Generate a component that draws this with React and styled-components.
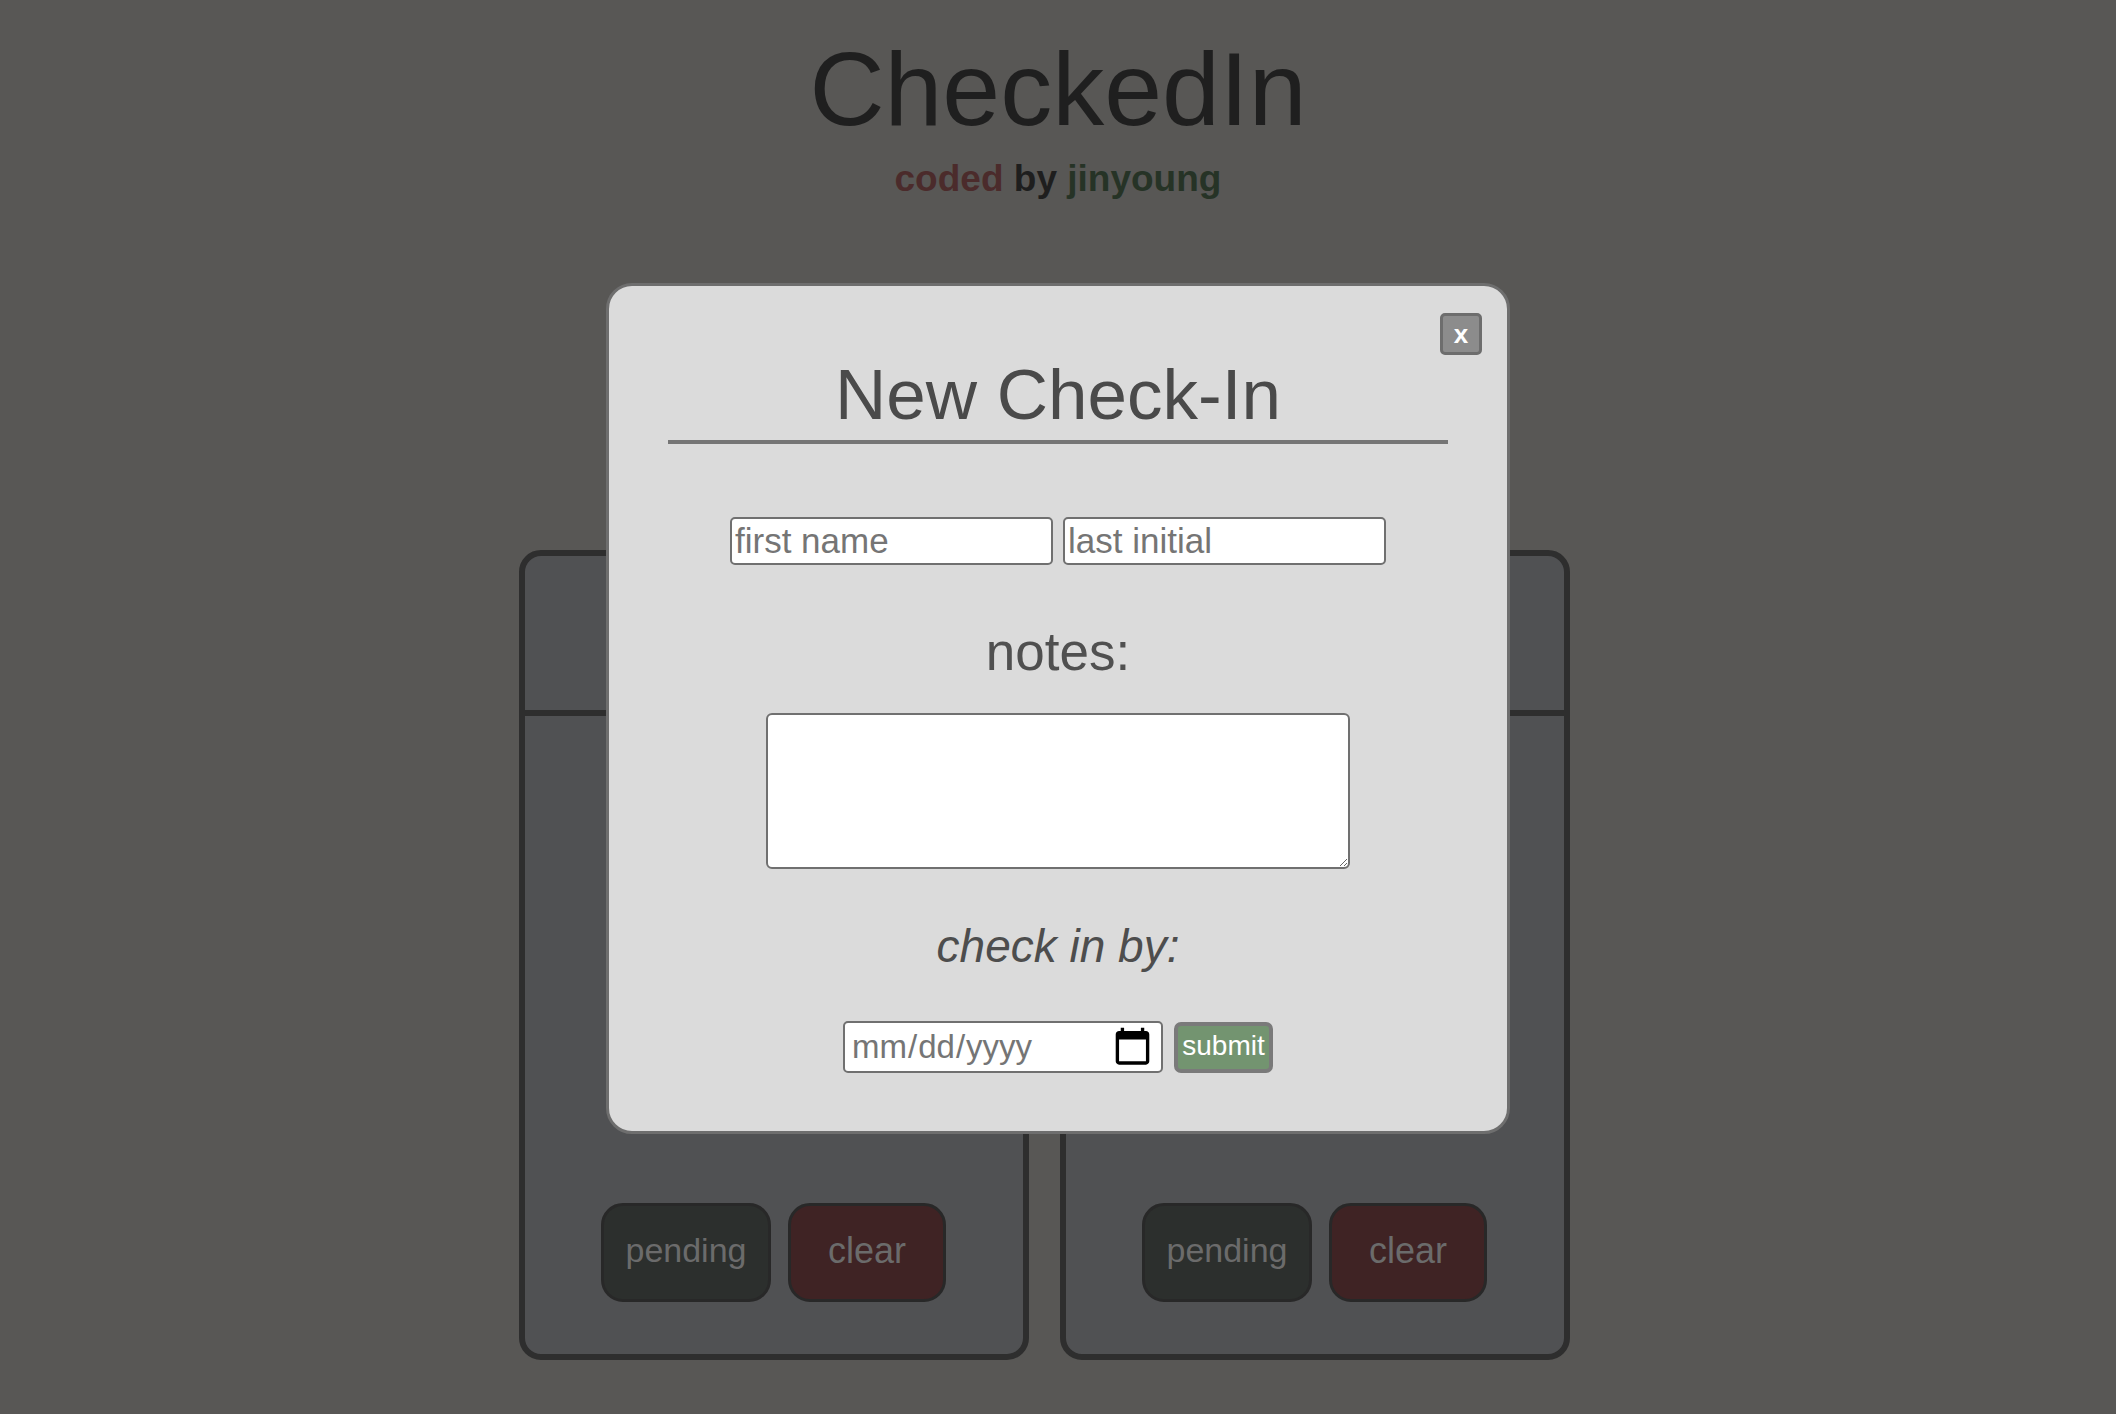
import React, { useState } from 'react';
import styled, { createGlobalStyle } from 'styled-components';

const GlobalStyle = createGlobalStyle`
    html, body {
        margin: 0;
        padding: 0;
        background: #585755;
        font-family: "Liberation Sans", Arial, Helvetica, sans-serif;
    }
    * {
        box-sizing: border-box;
    }
`;

const cards = [
    { id: 1, name: '' },
    { id: 2, name: '' }
];

const App = () => {
    const [input, setInput] = useState({
        first: '',
        last: '',
        notes: '',
        date: ''
    });
    const handleChange = e => {
        const { name, value } = e.target;
        setInput({ ...input, [name]: value });
    };
    return (
        <Page>
            <GlobalStyle />
            <Header>
                <Title>CheckedIn</Title>
                <Byline>
                    <Word tone="#4b2b2b">coded</Word> <Word tone="#1e1e1e">by</Word>{' '}
                    <Word tone="#263326">jinyoung</Word>
                </Byline>
            </Header>
            <CardRow>
                {cards.map(card => (
                    <Card key={card.id}>
                        <CardHead>{card.name}</CardHead>
                        <CardBody>
                            <ActionRow>
                                <ActionButton bg="#2c2f2d" w={170}>
                                    pending
                                </ActionButton>
                                <ActionButton bg="#3f2324" w={158} size={36}>
                                    clear
                                </ActionButton>
                            </ActionRow>
                        </CardBody>
                    </Card>
                ))}
            </CardRow>
            <Overlay>
                <Modal>
                    <CloseRow>
                        <CloseButton>x</CloseButton>
                    </CloseRow>
                    <ModalTitle>New Check-In</ModalTitle>
                    <NameRow>
                        <TextInput
                            name="first"
                            placeholder="first name"
                            value={input.first}
                            onChange={handleChange}
                        />
                        <TextInput
                            name="last"
                            placeholder="last initial"
                            value={input.last}
                            onChange={handleChange}
                        />
                    </NameRow>
                    <Label>notes:</Label>
                    <Notes name="notes" value={input.notes} onChange={handleChange} />
                    <DueLabel>check in by:</DueLabel>
                    <SubmitRow>
                        <DateInput
                            type="date"
                            name="date"
                            value={input.date}
                            onChange={handleChange}
                        />
                        <SubmitButton>submit</SubmitButton>
                    </SubmitRow>
                </Modal>
            </Overlay>
        </Page>
    );
};

export default App;

const Page = styled.div`
    min-height: 1414px;
    display: flex;
    flex-direction: column;
    align-items: center;
`;

const Header = styled.header`
    display: flex;
    flex-direction: column;
    align-items: center;
    padding-top: 34px;
`;

const Title = styled.h1`
    margin: 0;
    font-size: 104px;
    line-height: 110px;
    font-weight: 400;
    color: #1f1f1f;
`;

const Byline = styled.div`
    margin-top: 13px;
    font-size: 37px;
    line-height: 44px;
    font-weight: 700;
`;

const Word = styled.span`
    color: ${props => props.tone};
`;

const CardRow = styled.div`
    display: flex;
    gap: 31px;
    margin-top: 349px;
    padding-right: 28px;
`;

const Card = styled.div`
    width: 510px;
    height: 810px;
    display: flex;
    flex-direction: column;
    background: #505153;
    border: 6px solid #2e2e2e;
    border-radius: 22px;
    overflow: hidden;
`;

const CardHead = styled.div`
    height: 160px;
    border-bottom: 6px solid #2e2e2e;
`;

const CardBody = styled.div`
    flex: 1;
    display: flex;
    flex-direction: column;
    justify-content: flex-end;
    padding-bottom: 52px;
`;

const ActionRow = styled.div`
    display: flex;
    justify-content: center;
    gap: 17px;
`;

const ActionButton = styled.button`
    width: ${props => props.w}px;
    height: 99px;
    background: ${props => props.bg};
    border: 3px solid #282828;
    border-radius: 22px;
    color: #6b6b6b;
    font-family: "Liberation Sans", Arial, sans-serif;
    font-size: ${props => props.size || 34}px;
    padding: 0 0 4px;
`;

const Overlay = styled.div`
    position: fixed;
    inset: 0;
    display: flex;
    align-items: center;
    justify-content: center;
    padding-top: 3px;
`;

const Modal = styled.div`
    width: 904px;
    display: flex;
    flex-direction: column;
    align-items: center;
    background: #dbdbdb;
    border: 3px solid #6e6e6e;
    border-radius: 26px;
    padding: 27px 25px 58px;
`;

const CloseRow = styled.div`
    align-self: stretch;
    display: flex;
    justify-content: flex-end;
`;

const CloseButton = styled.button`
    width: 42px;
    height: 42px;
    padding: 0;
    background: #8c8c8c;
    border: 3px solid #6d6d6d;
    border-radius: 5px;
    color: #fff;
    font-family: "Liberation Sans", Arial, sans-serif;
    font-weight: 700;
    font-size: 26px;
    line-height: 1;
`;

const ModalTitle = styled.h2`
    width: 780px;
    margin: 0;
    padding-bottom: 5px;
    border-bottom: 4px solid #757575;
    text-align: center;
    font-size: 71px;
    line-height: 80px;
    font-weight: 400;
    color: #4a4a4a;
`;

const NameRow = styled.div`
    display: flex;
    gap: 10px;
    margin-top: 73px;
`;

const TextInput = styled.input`
    width: 323px;
    height: 48px;
    padding: 0 3px;
    border: 2px solid #707070;
    border-radius: 5px;
    background: #fff;
    font-family: "Liberation Sans", Arial, sans-serif;
    font-size: 35px;
    color: #333;
    &::placeholder {
        color: #757575;
    }
`;

const Label = styled.div`
    margin-top: 57px;
    font-size: 53px;
    line-height: 60px;
    color: #505050;
`;

const Notes = styled.textarea`
    width: 584px;
    height: 156px;
    margin-top: 31px;
    border: 2px solid #707070;
    border-radius: 6px;
    background: #fff;
    font-family: "Liberation Sans", Arial, sans-serif;
    font-size: 30px;
`;

const DueLabel = styled.div`
    margin-top: 50px;
    font-size: 46px;
    line-height: 54px;
    font-style: italic;
    color: #4d4d4d;
`;

const SubmitRow = styled.div`
    display: flex;
    align-items: center;
    gap: 11px;
    margin-top: 48px;
`;

const DateInput = styled.input`
    width: 320px;
    height: 52px;
    padding: 0 12px 0 6px;
    border: 2px solid #707070;
    border-radius: 5px;
    background: #fff;
    font-family: "Liberation Sans", Arial, sans-serif;
    font-size: 33px;
    color: #757575;
    &::-webkit-calendar-picker-indicator {
        transform: scale(1.3);
        padding: 0;
        margin: 0;
    }
`;

const SubmitButton = styled.button`
    width: 99px;
    height: 51px;
    padding: 0 0 2px;
    background: #739470;
    border: 4px solid #7a7a7a;
    border-radius: 7px;
    color: #fff;
    font-family: "Liberation Sans", Arial, sans-serif;
    font-size: 28px;
`;
